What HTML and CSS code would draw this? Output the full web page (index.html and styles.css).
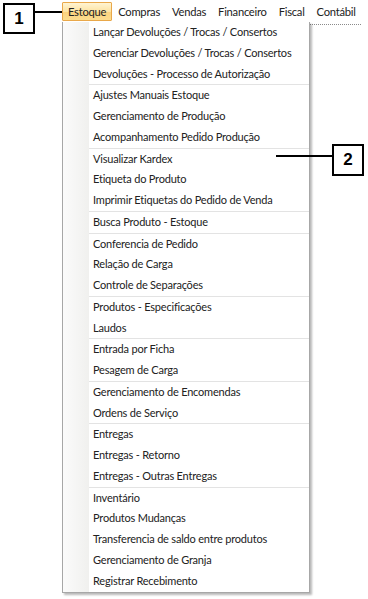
FILE: index.html
```html
<!DOCTYPE html>
<html lang="pt">
<head>
<meta charset="utf-8">
<link rel="stylesheet" href="styles.css">
</head>
<body>
<div class="page">
  <div class="menubar">
    <span class="mitem active">Estoque</span>
    <span class="mitem">Compras</span>
    <span class="mitem">Vendas</span>
    <span class="mitem">Financeiro</span>
    <span class="mitem">Fiscal</span>
    <span class="mitem">Contábil</span>
  </div>

  <div class="dotted"></div>

  <div class="dropdown">
    <div class="item">Lançar Devoluções / Trocas / Consertos</div>
    <div class="item">Gerenciar Devoluções / Trocas / Consertos</div>
    <div class="item">Devoluções - Processo de Autorização</div>
    <div class="sep"></div>
    <div class="item">Ajustes Manuais Estoque</div>
    <div class="item">Gerenciamento de Produção</div>
    <div class="item">Acompanhamento Pedido Produção</div>
    <div class="sep"></div>
    <div class="item">Visualizar Kardex</div>
    <div class="item">Etiqueta do Produto</div>
    <div class="item">Imprimir Etiquetas do Pedido de Venda</div>
    <div class="sep"></div>
    <div class="item">Busca Produto - Estoque</div>
    <div class="sep"></div>
    <div class="item">Conferencia de Pedido</div>
    <div class="item">Relação de Carga</div>
    <div class="item">Controle de Separações</div>
    <div class="sep"></div>
    <div class="item">Produtos - Especificações</div>
    <div class="item">Laudos</div>
    <div class="sep"></div>
    <div class="item">Entrada por Ficha</div>
    <div class="item">Pesagem de Carga</div>
    <div class="sep"></div>
    <div class="item">Gerenciamento de Encomendas</div>
    <div class="item">Ordens de Serviço</div>
    <div class="sep"></div>
    <div class="item">Entregas</div>
    <div class="item">Entregas - Retorno</div>
    <div class="item">Entregas - Outras Entregas</div>
    <div class="sep"></div>
    <div class="item">Inventário</div>
    <div class="item">Produtos Mudanças</div>
    <div class="item">Transferencia de saldo entre produtos</div>
    <div class="item">Gerenciamento de Granja</div>
    <div class="item">Registrar Recebimento</div>
  </div>

  <div class="callout callout-1">1</div>
  <div class="leader leader-1"></div>
  <div class="callout callout-2">2</div>
  <div class="leader leader-2"></div>
</div>
</body>
</html>
```

FILE: styles.css
```css
html, body {
  margin: 0;
  padding: 0;
  background: #ffffff;
}

.page {
  position: relative;
  width: 368px;
  height: 599px;
  overflow: hidden;
  font-family: Lato, "Liberation Sans", sans-serif;
  font-size: 11px;
  letter-spacing: -0.2px;
  color: #222222;
}

.menubar {
  display: flex;
  align-items: center;
  height: 22px;
  padding-left: 62px;
  box-sizing: border-box;
  padding-top: 1px;
}

.mitem {
  padding: 0 5px;
  height: 17px;
  line-height: 17px;
  border: 1px solid transparent;
  white-space: nowrap;
  font-size: 11.2px;
  letter-spacing: -0.25px;
}

.mitem.active {
  border-color: #e9a84a;
  background: linear-gradient(#fff4d2, #fde3a2 50%, #fbd27e 51%, #fcdc8e);
  border-radius: 1px;
}

.dotted {
  position: absolute;
  left: 310px;
  top: 24px;
  width: 51px;
  border-top: 1px dotted #8a8a8a;
}

.dropdown {
  position: absolute;
  left: 62px;
  top: 22px;
  width: 246px;
  padding: 0 0 1px;
  background-color: #ffffff;
  background-image: linear-gradient(to right, #fbfbfb, #f0f0ee);
  background-size: 26px 100%;
  background-repeat: no-repeat;
  border: 1px solid #a7a7a7;
  border-top: none;
  box-shadow: 2px 2px 2px rgba(0, 0, 0, 0.28);
}

.item {
  height: 20.75px;
  line-height: 20.75px;
  padding-left: 30px;
  white-space: nowrap;
}

.sep {
  height: 1px;
  margin-left: 26px;
  background: #e3e3e3;
}

.callout {
  position: absolute;
  width: 28px;
  height: 27px;
  border: 2px solid #000;
  background: #fff;
  font-family: "Liberation Sans", Arial, sans-serif;
  font-weight: bold;
  font-size: 17px;
  letter-spacing: 0;
  color: #000;
  display: flex;
  align-items: center;
  justify-content: center;
}

.callout-1 { left: 3px; top: 3px; }
.callout-2 { left: 332px; top: 144px; width: 28px; height: 28px; }

.leader {
  position: absolute;
  height: 2px;
  background: #000;
}

.leader-1 { left: 35px; top: 11px; width: 27px; }
.leader-2 { left: 276px; top: 155px; width: 56px; }
```
